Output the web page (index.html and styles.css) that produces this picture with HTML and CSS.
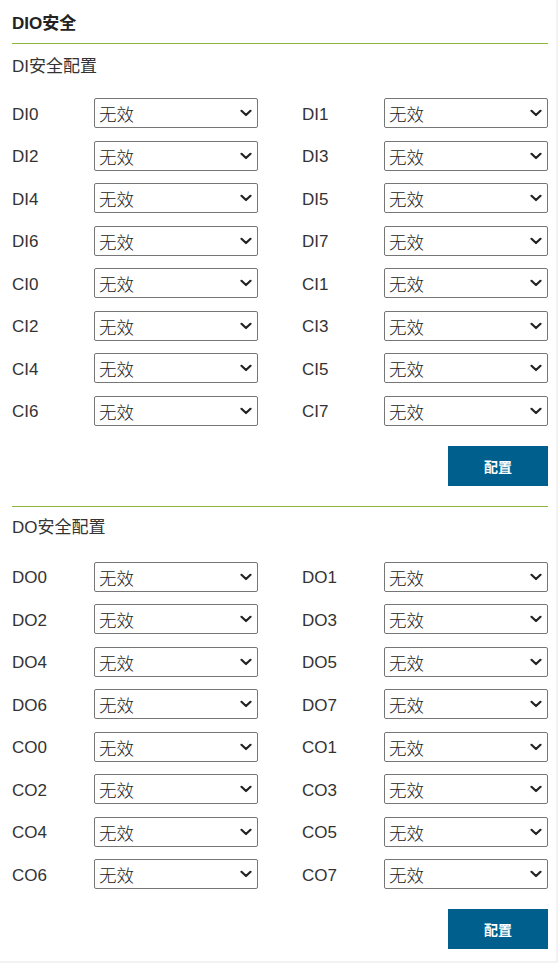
FILE: index.html
```html
<!DOCTYPE html>
<html lang="zh">
<head>
<meta charset="utf-8">
<link rel="stylesheet" href="styles.css">
</head>
<body>
<div class="panel">
  <h2 class="title">DIO安全</h2>
  <section class="group">
    <h3 class="subtitle">DI安全配置</h3>
    <div class="grid" id="di"></div>
    <div class="actions"><button class="btn">配置</button></div>
  </section>
  <section class="group second">
    <h3 class="subtitle">DO安全配置</h3>
    <div class="grid" id="do"></div>
    <div class="actions"><button class="btn">配置</button></div>
  </section>
</div>
<script src="script.js"></script>
</body>
</html>
```
FILE: script.js
```js
function fill(id, prefixes) {
  var grid = document.getElementById(id);
  prefixes.forEach(function (p) {
    for (var i = 0; i < 8; i++) {
      var f = document.createElement('div');
      f.className = 'field';
      f.innerHTML = '<label class="label">' + p + i + '</label>' +
        '<div class="selwrap"><select class="sel"><option>无效</option></select>' +
        '<svg class="chev" width="12" height="8" viewBox="0 0 12 8"><path d="M1.5 1.8 L6 6 L10.5 1.8" fill="none" stroke="#222" stroke-width="2.2" stroke-linecap="round" stroke-linejoin="round"/></svg></div>';
      grid.appendChild(f);
    }
  });
}
fill('di', ['DI', 'CI']);
fill('do', ['DO', 'CO']);
```
FILE: styles.css
```css
html, body {
  margin: 0;
  padding: 0;
  background: #f2f2f2;
}
body {
  font-family: "Liberation Sans", Arial, "Noto Sans CJK SC", sans-serif;
  color: #333;
}
.panel {
  width: 556px;
  height: 961px;
  box-sizing: border-box;
  background: #fff;
  padding: 13px 8px 0 12px;
}
.title {
  margin: 0;
  font-size: 17px;
  font-weight: bold;
  line-height: 22px;
  color: #222;
  padding-bottom: 8px;
  border-bottom: 1px solid #8db640;
}
.subtitle {
  margin: 0;
  font-size: 17px;
  font-weight: normal;
  line-height: 22px;
  color: #333;
  padding: 12px 0 0;
}
.grid {
  display: grid;
  grid-template-columns: 246px 246px;
  column-gap: 44px;
  row-gap: 12.5px;
  margin-top: 20px;
}
.field {
  display: flex;
  align-items: center;
  height: 30px;
}
.label {
  width: 82px;
  font-size: 17px;
  line-height: 20px;
  padding-top: 3px;
  color: #333;
}
.selwrap {
  position: relative;
  width: 164px;
  height: 30px;
}
.sel {
  appearance: none;
  -webkit-appearance: none;
  width: 164px;
  height: 30px;
  font-family: "Noto Sans CJK SC", sans-serif;
  font-size: 17.5px;
  font-weight: 300;
  color: #222;
  background: #fff;
  border: 1px solid #767676;
  border-radius: 2px;
  padding: 1px 0 0 4px;
  margin: 0;
}
.chev {
  position: absolute;
  right: 6px;
  top: 11px;
  pointer-events: none;
}
.actions {
  display: flex;
  justify-content: flex-end;
  margin-top: 20px;
}
.btn {
  width: 100px;
  height: 40px;
  border: 0;
  background: #005f8c;
  color: #fff;
  font-family: "Noto Sans CJK SC", sans-serif;
  font-weight: bold;
  font-size: 14px;
  padding: 0;
}
.second {
  margin-top: 20px;
  border-top: 1px solid #8db640;
}
.second .subtitle {
  padding-top: 10px;
}
.second .grid {
  margin-top: 23px;
}
```
